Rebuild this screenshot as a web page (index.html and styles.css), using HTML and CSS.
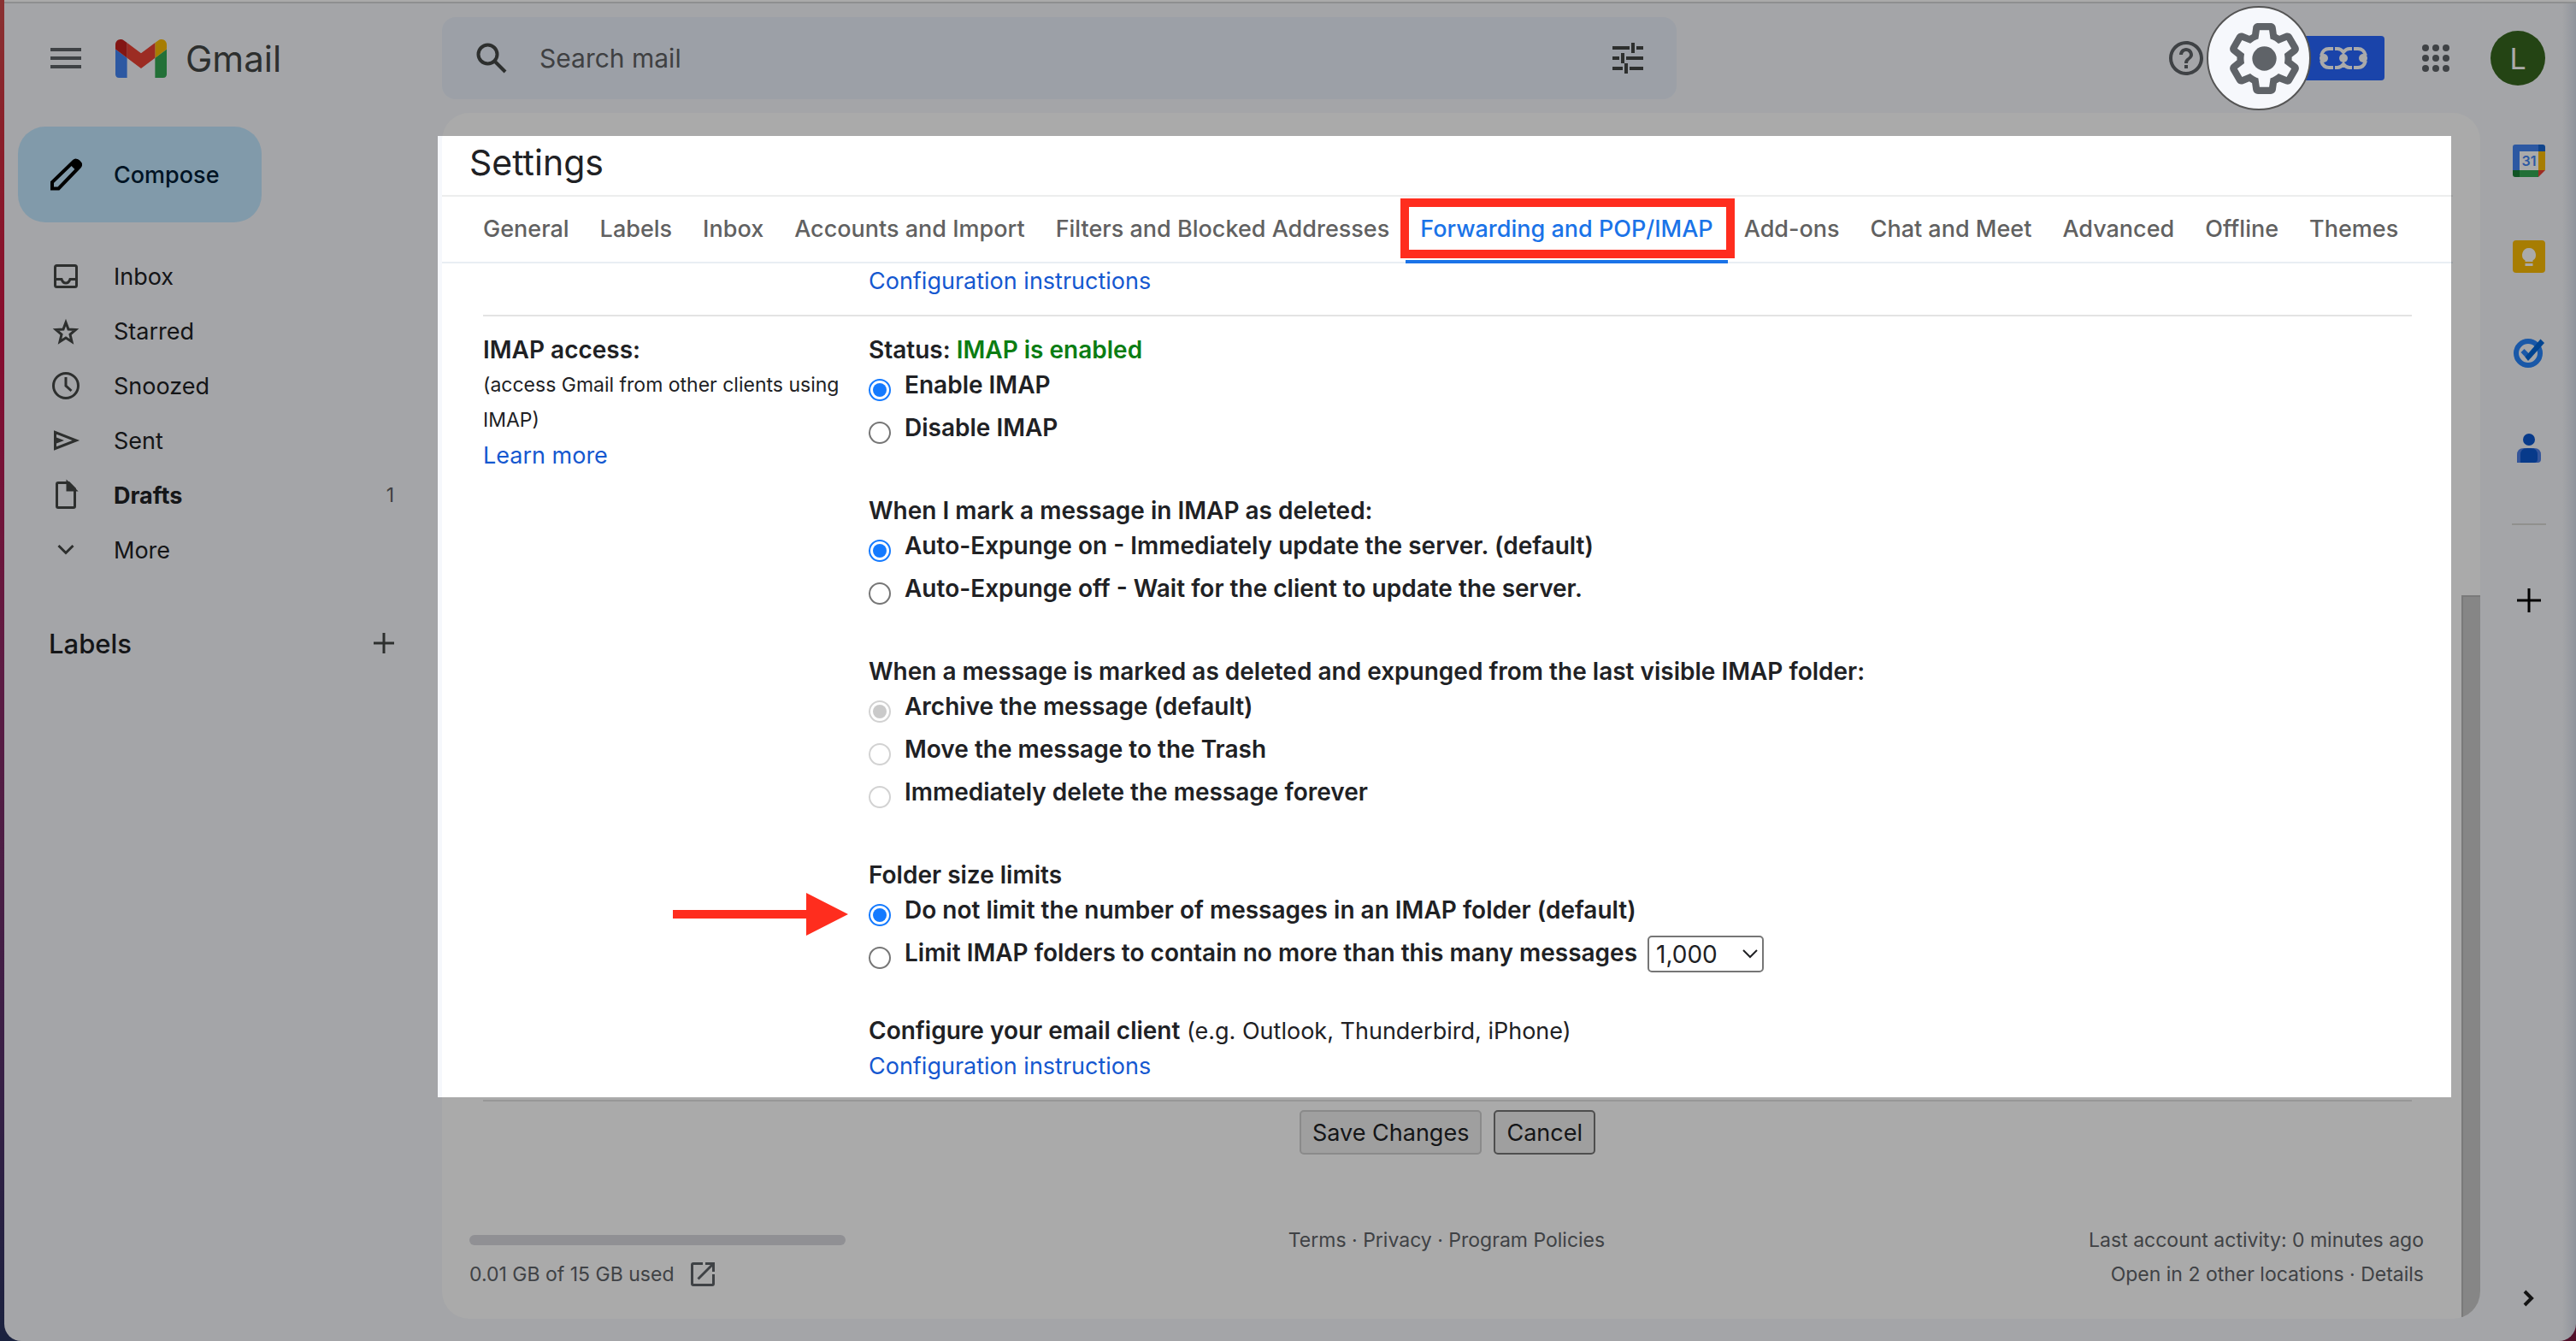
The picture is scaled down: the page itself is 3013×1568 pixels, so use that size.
FILE: index.html
```html
<!DOCTYPE html>
<html lang="en">
<head>
<meta charset="utf-8">
<meta name="viewport" content="width=device-width, initial-scale=1">
<title>Settings - Gmail</title>
<link rel="stylesheet" href="styles.css">
</head>
<body>
<div class="window">
  <header class="topbar">
    <div class="brand">
      <button class="icon-btn" type="button" aria-label="Main menu">
        <svg width="36" height="24" viewBox="0 0 36 24" fill="#5f6368"><path d="M0 0h36v4H0zM0 10h36v4H0zM0 20h36v4H0z"/></svg>
      </button>
      <a class="logo" href="#">
        <svg width="60" height="45" viewBox="52 42 88 66"><path fill="#4285f4" d="M58 108h14V74L52 59v43c0 3.32 2.69 6 6 6"/><path fill="#34a853" d="M120 108h14c3.32 0 6-2.69 6-6V59l-20 15"/><path fill="#fbbc04" d="M120 48v26l20-15v-8c0-7.42-8.47-11.65-14.4-7.2"/><path fill="#ea4335" d="M72 74V48l24 18 24-18v26L96 92"/><path fill="#c5221f" d="M52 51v8l20 15V48l-5.6-4.2c-5.94-4.45-14.4-.22-14.4 7.2"/></svg>
        <span>Gmail</span>
      </a>
    </div>
    <form class="search">
      <button class="icon-btn" type="button" aria-label="Search">
        <svg width="36" height="36" viewBox="0 0 36 36" fill="none" stroke="#444746" stroke-width="4"><circle cx="13.500" cy="13.500" r="11"/><path d="M21.500 21.500 34 34"/></svg>
      </button>
      <input type="text" placeholder="Search mail" aria-label="Search mail">
      <button class="icon-btn" type="button" aria-label="Show search options">
        <svg width="38" height="38" viewBox="0 0 38 38" fill="none" stroke="#444746" stroke-width="4"><path d="M1 7h20M29 7h8M25 1v12M1 19h8M17 19h20M13 13v12M1 31h12M21 31h16M17 25v12"/></svg>
      </button>
    </form>
    <div class="actions">
      <button class="icon-btn" type="button" aria-label="Support">
        <svg width="40" height="40" viewBox="2 2 20 20" fill="#5f6368"><path d="M11 18h2v-2h-2zm1-16C6.480 2 2 6.480 2 12s4.480 10 10 10 10-4.480 10-10S17.520 2 12 2m0 18c-4.410 0-8-3.590-8-8s3.590-8 8-8 8 3.590 8 8-3.590 8-8 8m0-14c-2.210 0-4 1.790-4 4h2c0-1.100.9-2 2-2s2 .9 2 2c0 2-3 1.750-3 5h2c0-2.250 3-2.500 3-5 0-2.210-1.790-4-4-4"/></svg>
      </button>
      <button class="icon-btn gear" type="button" aria-label="Settings">
        <svg width="97" height="97" viewBox="0 0 24 24" fill="#5f6368"><path d="M13.850 22.250h-3.700c-.74 0-1.360-.54-1.450-1.270l-.27-1.890c-.27-.14-.53-.29-.79-.46l-1.800.72c-.7.26-1.470-.03-1.810-.65L2.200 15.530c-.35-.66-.2-1.440.36-1.880l1.530-1.190c-.01-.15-.02-.3-.02-.46 0-.15.01-.31.02-.46l-1.520-1.190c-.59-.45-.74-1.260-.37-1.880l1.850-3.190c.34-.62 1.110-.9 1.790-.63l1.810.73c.26-.17.52-.32.78-.46l.27-1.910c.09-.7.71-1.250 1.440-1.250h3.700c.74 0 1.360.54 1.450 1.270l.27 1.890c.27.14.53.29.79.46l1.800-.72c.71-.26 1.480.03 1.820.65l1.840 3.180c.36.66.2 1.440-.36 1.880l-1.520 1.190c.01.15.02.3.02.46s-.01.31-.02.46l1.520 1.190c.56.45.72 1.230.37 1.860l-1.860 3.220c-.34.62-1.110.9-1.800.63l-1.800-.72c-.26.17-.52.32-.78.46l-.27 1.910c-.1.680-.72 1.220-1.460 1.220zm-3.230-2h2.760l.37-2.550.53-.22c.44-.18.88-.44 1.340-.78l.45-.34 2.380.96 1.380-2.400-2.030-1.580.07-.56c.03-.26.06-.51.06-.78s-.03-.53-.06-.78l-.07-.56 2.030-1.580-1.390-2.400-2.390.96-.45-.35c-.42-.32-.87-.58-1.330-.77l-.52-.22-.37-2.550h-2.760l-.37 2.550-.53.21c-.44.19-.88.44-1.340.79l-.45.33-2.380-.95-1.390 2.390 2.030 1.580-.07.56a7 7 0 0 0-.06.79c0 .26.02.53.06.78l.07.56-2.030 1.580 1.380 2.400 2.390-.96.45.35c.43.33.86.58 1.330.77l.53.22z"/><circle cx="12" cy="12" r="3.500"/></svg>
      </button>
      <button class="icon-btn chain" type="button" aria-label="Links">
        <svg width="56" height="28" viewBox="0 0 56 28"><g fill="none" stroke="#fff" stroke-width="4"><path d="M2 11q2-8 9-8h5M18 3h3q4 0 7 4 3-4 7-4h3M40 3h5q7 0 9 8M2 17q2 8 9 8h5M18 25h3q4 0 7-4 3 4 7 4h3M40 25h5q7 0 9-8"/></g><g fill="#fff"><circle cx="5" cy="14" r="5"/><circle cx="28" cy="14" r="5"/><circle cx="51" cy="14" r="5"/></g></svg>
      </button>
      <button class="icon-btn apps" type="button" aria-label="Google apps">
        <svg width="32" height="32" viewBox="0 0 32 32" fill="#5f6368"><circle cx="4" cy="4" r="4"/><circle cx="16" cy="4" r="4"/><circle cx="28" cy="4" r="4"/><circle cx="4" cy="16" r="4"/><circle cx="16" cy="16" r="4"/><circle cx="28" cy="16" r="4"/><circle cx="4" cy="28" r="4"/><circle cx="16" cy="28" r="4"/><circle cx="28" cy="28" r="4"/></svg>
      </button>
      <button class="icon-btn avatar" type="button">L</button>
    </div>
  </header>

  <div class="columns">
    <aside class="sidebar">
      <button class="compose" type="button">
        <svg width="38" height="38" viewBox="0 0 38 38"><path fill="none" stroke="#000" stroke-width="4" stroke-linejoin="miter" d="M2 35.500V28L27.500 3.500q2-2 4 0l2.500 2.500q2 2 0 4L9.500 35.500z"/><path d="M23 7.500 28 2.500q3-3 6 0l1.500 1.500q3 3 0 6l-5 5z"/></svg>
        <span>Compose</span>
      </button>
      <nav class="folders">
        <a href="#"><svg width="40" height="40" viewBox="0 0 40 40"><rect x="7.500" y="7.500" width="25" height="25" rx="2"/><path d="M7 23.500h8c1 3 3 4.500 5 4.500s4-1.500 5-4.500h8"/></svg><span>Inbox</span></a>
        <a href="#"><svg width="40" height="40" viewBox="0 0 40 40"><path d="m20 10 3 8 8.500.500-6.500 5.500 2 8.500-7-4.500-7 4.500 2-8.500-6.500-5.500L17 18z"/></svg><span>Starred</span></a>
        <a href="#"><svg width="40" height="40" viewBox="0 0 40 40"><circle cx="20" cy="20" r="14.500"/><path d="M20 10v10l6.500 6"/></svg><span>Snoozed</span></a>
        <a href="#"><svg width="40" height="40" viewBox="0 0 40 40"><path d="M7.500 10.500 32 20 7.500 29.500z"/><path d="M9 16.500 18 20l-9 3.500z" fill="#444746" stroke="none"/></svg><span>Sent</span></a>
        <a class="unread" href="#"><svg width="40" height="40" viewBox="0 0 40 40"><path d="M11 5.500h12.500l7 7V33q0 1.500-1.500 1.500H11q-1.500 0-1.500-1.500V7q0-1.500 1.500-1.500z"/><path d="M22 5v9h9z" fill="#444746"/></svg><span>Drafts</span><span class="count">1</span></a>
        <a href="#"><svg width="40" height="40" viewBox="0 0 40 40"><path d="m11.500 15 8.500 8.500 8.500-8.500"/></svg><span>More</span></a>
      </nav>
      <div class="labels">
        <h2>Labels</h2>
        <button class="icon-btn" type="button" aria-label="Create new label">
          <svg width="24" height="24" viewBox="0 0 24 24" fill="#444746"><path d="M10.500 0h3v10.500H24v3H13.500V24h-3V13.500H0v-3h10.500z"/></svg>
        </button>
      </div>
    </aside>

    <main class="panel">
      <div class="card">
        <div class="card-body">
          <h1>Settings</h1>
          <nav class="tabs">
            <a href="#">General</a>
            <a href="#">Labels</a>
            <a href="#">Inbox</a>
            <a href="#">Accounts and Import</a>
            <a href="#">Filters and Blocked Addresses</a>
            <a class="active" href="#">Forwarding and POP/IMAP</a>
            <a href="#">Add-ons</a>
            <a href="#">Chat and Meet</a>
            <a href="#">Advanced</a>
            <a href="#">Offline</a>
            <a href="#">Themes</a>
          </nav>

          <section class="row first">
            <div class="name"></div>
            <div class="value"><a href="#">Configuration instructions</a></div>
          </section>

          <section class="row">
            <div class="name">
              <h3>IMAP access:</h3>
              <p class="hint">(access Gmail from other clients using IMAP)</p>
              <a href="#">Learn more</a>
            </div>
            <form class="value">
              <div class="group">
                <h3>Status: <span class="ok">IMAP is enabled</span></h3>
                <label class="option"><input type="radio" name="imap" checked><span>Enable IMAP</span></label>
                <label class="option"><input type="radio" name="imap"><span>Disable IMAP</span></label>
              </div>
              <div class="group">
                <h3>When I mark a message in IMAP as deleted:</h3>
                <label class="option"><input type="radio" name="expunge" checked><span>Auto-Expunge on - Immediately update the server. (default)</span></label>
                <label class="option"><input type="radio" name="expunge"><span>Auto-Expunge off - Wait for the client to update the server.</span></label>
              </div>
              <div class="group">
                <h3>When a message is marked as deleted and expunged from the last visible IMAP folder:</h3>
                <label class="option"><input type="radio" name="deleted" checked disabled><span>Archive the message (default)</span></label>
                <label class="option"><input type="radio" name="deleted" disabled><span>Move the message to the Trash</span></label>
                <label class="option"><input type="radio" name="deleted" disabled><span>Immediately delete the message forever</span></label>
              </div>
              <div class="group">
                <h3>Folder size limits</h3>
                <div class="option">
                  <svg class="arrow" width="205" height="50" viewBox="0 0 205 50" fill="#ff2d1e"><path d="M0 20h156V0l49 25-49 25V30H0z"/></svg>
                  <input type="radio" name="limit" id="nolimit" checked><label for="nolimit">Do not limit the number of messages in an IMAP folder (default)</label>
                </div>
                <div class="option">
                  <input type="radio" name="limit" id="limit"><label for="limit">Limit IMAP folders to contain no more than this many messages</label>
                  <span class="select">
                    <select aria-label="Maximum messages"><option>1,000</option><option>2,000</option><option>5,000</option><option>10,000</option></select>
                    <svg width="18" height="12" viewBox="0 0 18 12" fill="none" stroke="#202124" stroke-width="2"><path d="m1 1 8 8 8-8"/></svg>
                  </span>
                </div>
              </div>
              <div class="client">
                <p><b>Configure your email client</b> (e.g. Outlook, Thunderbird, iPhone)</p>
                <a href="#">Configuration instructions</a>
              </div>
            </form>
          </section>

          <div class="buttons">
            <button class="save" type="button">Save Changes</button>
            <button class="cancel" type="button">Cancel</button>
          </div>

          <footer class="footer">
            <div class="storage">
              <div class="meter"></div>
              <a href="#">0.01 GB of 15 GB used
                <svg width="28" height="28" viewBox="0 0 28 28" fill="none" stroke="#5f6368" stroke-width="3"><path d="M14 1.500H3Q1.500 1.500 1.500 3v22q0 1.500 1.500 1.500h22q1.500 0 1.500-1.500V14M17 1.500h9.500V11M26 2 8.500 19.500"/></svg>
              </a>
            </div>
            <div class="legal"><a href="#">Terms</a> · <a href="#">Privacy</a> · <a href="#">Program Policies</a></div>
            <div class="activity">Last account activity: 0 minutes ago<br>Open in 2 other locations · <a href="#">Details</a></div>
          </footer>
        </div>
        <div class="scrollbar"><div class="thumb"></div></div>
      </div>
      <div class="spotlight"></div>
    </main>

    <aside class="rail">
      <button class="icon-btn" type="button" aria-label="Calendar">
        <svg width="38" height="38" viewBox="0 0 38 38"><path fill="#fff" d="M8 8h22v22H8z"/><path fill="#4285f4" d="M0 3q0-3 3-3h27v8H8v22H0z"/><path fill="#1967d2" d="M30 0h5q3 0 3 3v5h-8z"/><path fill="#fbbc04" d="M30 8h8v22h-8z"/><path fill="#34a853" d="M8 30h22v8H8z"/><path fill="#188038" d="M0 30h8v8H3q-3 0-3-3z"/><path fill="#ea4335" d="M30 30h8l-8 8z"/><text x="19" y="25" text-anchor="middle" class="cal-day">31</text></svg>
      </button>
      <button class="icon-btn" type="button" aria-label="Keep">
        <svg width="38" height="38" viewBox="0 0 38 38"><rect width="38" height="38" rx="4" fill="#fbbc04"/><path fill="#fff" d="M19 9a8 8 0 0 0-4.500 14.600V25h9v-1.400A8 8 0 0 0 19 9M14.500 27h9v3h-9z"/></svg>
      </button>
      <button class="icon-btn" type="button" aria-label="Tasks">
        <svg width="38" height="38" viewBox="0 0 38 38"><circle cx="18" cy="20" r="14" fill="none" stroke="#2684fc" stroke-width="6"/><path fill="#2684fc" d="m9.500 19 4-4 5 5 4 4-4.500 4z"/><path fill="#0066da" d="m14.500 24.500 18-21 4.500 4.500-19 21z"/></svg>
      </button>
      <button class="icon-btn" type="button" aria-label="Contacts">
        <svg width="28" height="34" viewBox="0 0 28 34"><circle cx="14" cy="7" r="7" fill="#0b57d0"/><path fill="#4f80e8" d="M0 34V25q0-8 8-8h12q8 0 8 8v5q0 4-4 4z"/><path fill="#0b57d0" d="M4 34V25q0-8 8-8h4q8 0 8 8v5q0 4-4 4z"/></svg>
      </button>
      <hr>
      <button class="icon-btn" type="button" aria-label="Get add-ons">
        <svg width="28" height="28" viewBox="0 0 28 28"><path d="M12.500 0h3v12.500H28v3H15.500V28h-3V15.500H0v-3h12.500z"/></svg>
      </button>
      <button class="icon-btn collapse" type="button" aria-label="Hide side panel">
        <svg width="14" height="20" viewBox="0 0 14 20" fill="none" stroke="#1f1f1f" stroke-width="4"><path d="m2 2 8 8-8 8"/></svg>
      </button>
    </aside>
  </div>
</div>
</body>
</html>
```
FILE: styles.css
```css
* { box-sizing: border-box; }

body {
  margin: 0;
  overflow-x: hidden;
  background: linear-gradient(to right, transparent 50%, #7a1840 50%),
    linear-gradient(#d04c4c, #d02f3f 10%, #cb1245 25%, #8c2a66 50%, #55306a 80%, #28335f);
  color: #202124;
  font: 27px/41px Inter, "Liberation Sans", sans-serif;
}

h1, h2, h3, p { margin: 0; font-size: inherit; }
a { color: #1558d0; text-decoration: none; }
button, input, select { font: inherit; color: inherit; }
svg { display: block; flex: none; }

.window {
  display: flex;
  flex-direction: column;
  min-height: 100vh;
  margin-left: 5px;
  padding-bottom: 26px;
  border-top: 2px solid #fff;
  border-radius: 0 0 20px 20px;
  background: linear-gradient(to left, #d8deea, #f6f8fc 16px);
}

.icon-btn {
  display: flex;
  align-items: center;
  justify-content: center;
  padding: 0;
  border: 0;
  background: none;
}

/* Top bar */
.topbar {
  display: flex;
  align-items: center;
  height: 130px;
  border-top: 2px solid #d6d7d9;
}
.brand {
  display: flex;
  flex: none;
  align-items: center;
  gap: 40px;
  width: 512px;
  padding-left: 54px;
}
.logo {
  display: flex;
  align-items: center;
  gap: 22px;
  color: #444746;
  font-size: 42px;
}
.search {
  display: flex;
  align-items: center;
  gap: 38px;
  width: 48%;
  height: 96px;
  padding: 0 38px 0 40px;
  border-radius: 16px;
  background: #eaf1fb;
}
.search input {
  flex: 1;
  min-width: 0;
  padding: 0;
  border: 0;
  outline: 0;
  background: none;
  font-size: 30px;
}
.search input::placeholder { color: #5f6164; opacity: 1; }
.actions {
  display: flex;
  align-items: center;
  margin-right: 36px;
  margin-left: auto;
}
.gear {
  position: relative;
  z-index: 3;
  width: 122px;
  height: 122px;
  margin-left: 4px;
  padding-left: 12px;
  border: 2px solid #555;
  border-radius: 50%;
  background: #f6f8fc;
}
.chain {
  justify-content: flex-end;
  width: 100px;
  height: 52px;
  margin-left: -14px;
  padding-right: 20px;
  border-radius: 4px;
  background: #2866ff;
}
.apps { margin: 0 48px 0 44px; }
.avatar {
  width: 64px;
  height: 64px;
  border-radius: 50%;
  background: #37661f;
  color: #fff;
  font-size: 34px;
}

.columns {
  display: flex;
  flex: 1;
}

/* Sidebar */
.sidebar {
  flex: none;
  width: 512px;
  padding: 16px 56px 0 16px;
}
.compose {
  display: flex;
  align-items: center;
  gap: 36px;
  width: 285px;
  height: 112px;
  padding: 0 0 0 38px;
  border: 0;
  border-radius: 32px;
  background: #c2e7ff;
  color: #001d35;
  font-weight: 500;
}
.folders { margin-top: 31px; }
.folders a {
  display: flex;
  align-items: center;
  gap: 36px;
  height: 64px;
  padding-left: 36px;
  color: #202124;
}
.folders svg {
  fill: none;
  stroke: #444746;
  stroke-width: 3;
}
.folders .unread { font-weight: 700; }
.folders .count {
  margin-left: auto;
  color: #5f6164;
  font-size: 23px;
  font-weight: 400;
}
.labels {
  display: flex;
  align-items: center;
  justify-content: space-between;
  height: 64px;
  margin-top: 45px;
  padding-left: 36px;
}
.labels h2 {
  font-size: 31px;
  font-weight: 500;
}

/* Settings card */
.panel {
  position: relative;
  flex: 1;
  min-width: 0;
}
.card {
  display: flex;
  min-height: 100%;
  overflow: hidden;
  border-radius: 32px;
  background: #fff;
}
.card-body {
  flex: 1;
  min-width: 0;
}
.card h1 {
  padding: 34px 32px 14px;
  font-size: 41px;
  font-weight: 400;
  line-height: 48px;
}
.tabs {
  display: flex;
  gap: 2px;
  height: 80px;
  margin-right: 10px;
  padding-left: 31px;
  border-top: 2px solid #eceded;
  border-bottom: 2px solid #e9eef3;
}
.tabs a {
  position: relative;
  padding: 17px;
  color: #616161;
  font-weight: 500;
  white-space: nowrap;
}
.tabs .active { color: #1a73e8; }
.tabs .active::before {
  content: "";
  position: absolute;
  inset: 2px -8px 4px -6px;
  z-index: 1;
  border: 10px solid #ff2d1e;
}
.tabs .active::after {
  content: "";
  position: absolute;
  inset: auto 0 -2px 0;
  height: 4px;
  background: #1a73e8;
}

.row {
  display: grid;
  grid-template-columns: 451px 1fr;
  margin: 0 58px 0 48px;
  padding: 19px 0;
  border-bottom: 2px solid #e3e3e3;
}
.row.first { padding-top: 0; }
.row h3, .option, .client b {
  font-size: 28px;
  font-weight: 600;
}
.name { padding-right: 24px; }
.hint { font-size: 23px; }
.ok { color: #0b7d13; }
.group { margin-bottom: 47px; }
.option {
  position: relative;
  display: flex;
  align-items: flex-start;
  height: 50px;
}
.option input {
  appearance: none;
  flex: none;
  display: grid;
  place-items: center;
  width: 26px;
  height: 26px;
  margin: 13px 16px 0 0;
  border: 2px solid #767676;
  border-radius: 50%;
  background: #fff;
}
.option input:checked { border-color: #147aff; }
.option input:checked::before {
  content: "";
  width: 16px;
  height: 16px;
  border-radius: 50%;
  background: #147aff;
}
.option input:disabled { border-color: #d2d2d2; }
.option input:disabled::before { background: #cacaca; }
.arrow {
  position: absolute;
  top: 0;
  right: 100%;
  margin-right: 24px;
}
.select {
  position: relative;
  margin-left: 12px;
}
.select select {
  appearance: none;
  width: 136px;
  height: 43px;
  padding: 0 8px;
  border: 2px solid #767676;
  border-radius: 5px;
  background: #fff;
  font-weight: 400;
}
.select svg {
  position: absolute;
  top: 16px;
  right: 7px;
  pointer-events: none;
}
.client { margin-top: -6px; }

.buttons {
  display: flex;
  justify-content: center;
  gap: 14px;
  margin: 0 58px 0 48px;
  padding-top: 10px;
}
.buttons button {
  height: 52px;
  padding: 0 13px;
  border: 2px solid #767676;
  border-radius: 5px;
  background: #efefef;
}
.buttons .save { border-color: #cfcfcf; }

.footer {
  display: grid;
  grid-template-columns: 1fr auto 1fr;
  padding: 80px 44px 32px 32px;
  color: #5f6368;
  font-size: 23px;
  line-height: 40px;
}
.footer a { color: inherit; }
.storage a {
  display: flex;
  align-items: center;
  gap: 20px;
}
.meter {
  width: 440px;
  height: 12px;
  margin: 14px 0;
  border-radius: 6px;
  background: #d8d9df;
}
.activity { text-align: right; }

.scrollbar {
  display: flex;
  flex: none;
  align-items: flex-end;
  width: 22px;
}
.thumb {
  width: 100%;
  height: 60%;
  border-top: 2px solid #b8b8b8;
  border-left: 2px solid #b8b8b8;
  background: #cacaca;
}

/* Dims everything outside its own box */
.spotlight {
  position: absolute;
  inset: 27px 34px 259px -5px;
  z-index: 2;
  box-shadow: 0 0 0 9999px rgba(0, 0, 0, .333);
  pointer-events: none;
}

/* Side panel */
.rail {
  display: flex;
  flex: none;
  flex-direction: column;
  align-items: center;
  width: 112px;
  padding-left: 2px;
}
.rail .icon-btn {
  width: 100%;
  height: 112px;
}
.rail hr {
  width: 40px;
  margin: 32px 0;
  border: 0;
  border-top: 2px solid #d8d9d6;
}
.rail .collapse {
  height: 48px;
  margin-top: auto;
}
.cal-day {
  fill: #4285f4;
  font-size: 16px;
  font-weight: 600;
}
```
